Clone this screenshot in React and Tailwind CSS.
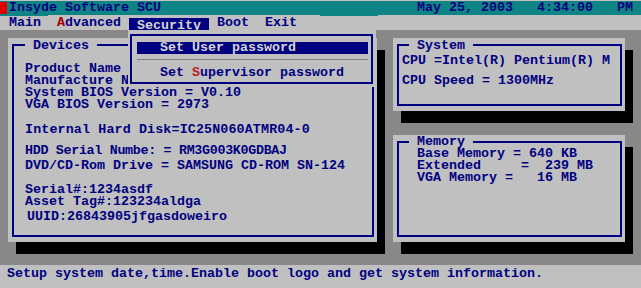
import React from "react";

function Panel({ title, titleClass, className, innerClass, children }) {
  return (
    <div className={"relative bg-[#c0c0c0] shadow-[8px_12px_0_#000] pt-[6px] pl-[4px] pr-[3px] pb-[5px] " + className}>
      <div className={"h-full border-2 border-[#000080] " + innerClass}>{children}</div>
      <div className={"absolute bg-[#c0c0c0] whitespace-pre leading-[12px] " + titleClass}>{" " + title + " "}</div>
    </div>
  );
}

export default function App() {
  return (
    <div className="relative w-[641px] h-[288px] overflow-hidden bg-[#888888] font-['Liberation_Mono',monospace] font-bold text-[13.33px] leading-[12px] text-[#000080] flex flex-col">
      {/* title bar */}
      <div className="h-[15px] border-t border-[#c0c0c0] bg-[#0f8484] flex items-center pr-[8px]">
        <div className="w-[7px] h-[12px] bg-[#e00000]" />
        <span className="ml-[2px] whitespace-pre">Insyde Software SCU</span>
        <span className="ml-auto whitespace-pre">May 25, 2003   4:34:00   PM</span>
      </div>
      <div className="h-[1px] flex">
        <div className="w-[48px] bg-[#0f8484]" />
        <div className="w-[272px] bg-[#c0c0c0]" />
        <div className="w-[58px] bg-[#0f8484]" />
        <div className="flex-1 bg-[#c0c0c0]" />
      </div>
      {/* menu bar */}
      <div className="h-[14px] bg-[#c0c0c0] flex items-start pl-[9px] whitespace-pre">
        <div className="pt-[0.5px]">
          {"Main  "}
          <span className="text-[#a00000]">A</span>
          {"dvanced "}
        </div>
        <div className="mt-[2px] h-[12px] bg-[#000080] text-[#d4d4d4] pt-[1.5px]">{" Security "}</div>
        <div className="pt-[0.5px]">{" Boot  Exit"}</div>
      </div>
      {/* body */}
      <div className="h-[235px] flex pt-[8px] pl-[8px]">
        <Panel
          title="Devices"
          titleClass="left-[17px] top-[2px]"
          className="w-[369px] h-[204px]"
          innerClass="pl-[11px] pt-[17px] flex flex-col whitespace-pre"
        >
          <div>Product Name</div>
          <div>Manufacture N</div>
          <div>System BIOS Version = V0.10</div>
          <div>VGA BIOS Version = 2973</div>
          <div className="mt-[13px] tracking-[0.14px]">Internal Hard Disk=IC25N060ATMR04-0</div>
          <div className="mt-[9px] tracking-[-0.3px]">HDD Serial Numbe: = RM3G003K0GDBAJ</div>
          <div className="mt-[3px]">DVD/CD-Rom Drive = SAMSUNG CD-ROM SN-124</div>
          <div className="mt-[12px]">Serial#:1234asdf</div>
          <div>Asset Tag#:123234aldga</div>
          <div className="mt-[3px] ml-[2px]">UUID:26843905jfgasdoweiro</div>
        </Panel>
        <div className="ml-[16px] w-[232px] flex flex-col">
          <Panel
            title="System"
            titleClass="left-[16px] top-[2px]"
            className="h-[73px] pb-[4px]"
            innerClass="pl-[3px] pt-[9px] flex flex-col whitespace-pre"
          >
            <div>CPU =Intel(R) Pentium(R) M</div>
            <div className="mt-[8px]">CPU Speed = 1300MHz</div>
          </Panel>
          <Panel
            title="Memory"
            titleClass="left-[16px] top-[1px]"
            className="mt-[24px] h-[107px]"
            innerClass="pl-[18px] pt-[5px] flex flex-col whitespace-pre"
          >
            <div>Base Memory = 640 KB</div>
            <div>Extended     =  239 MB</div>
            <div>VGA Memory =   16 MB</div>
          </Panel>
        </div>
      </div>
      {/* status bar */}
      <div className="h-[23px] bg-[#c0c0c0] pl-[7px] pt-[2.5px] whitespace-pre">
        Setup system date,time.Enable boot logo and get system information.
      </div>
      {/* dropdown menu */}
      <div className="absolute left-[128px] top-[30px] w-[248px] h-[57px] bg-[#c0c0c0] pt-[4px] pl-[2px] pr-[3px]">
        <div className="h-[50px] border-2 border-[#000080] flex flex-col whitespace-pre">
          <div className="mt-[6px] ml-[5px] mr-[3px] h-[12px] bg-[#000080] text-[#d4d4d4] pl-[23px]">Set User password</div>
          <div className="mt-[5px] ml-[5px] mr-[3px] h-[1px] bg-[#808080]" />
          <div className="mt-[7px] pl-[28px]">
            {"Set "}
            <span className="text-[#c02020]">S</span>
            {"upervisor password"}
          </div>
        </div>
      </div>
    </div>
  );
}
